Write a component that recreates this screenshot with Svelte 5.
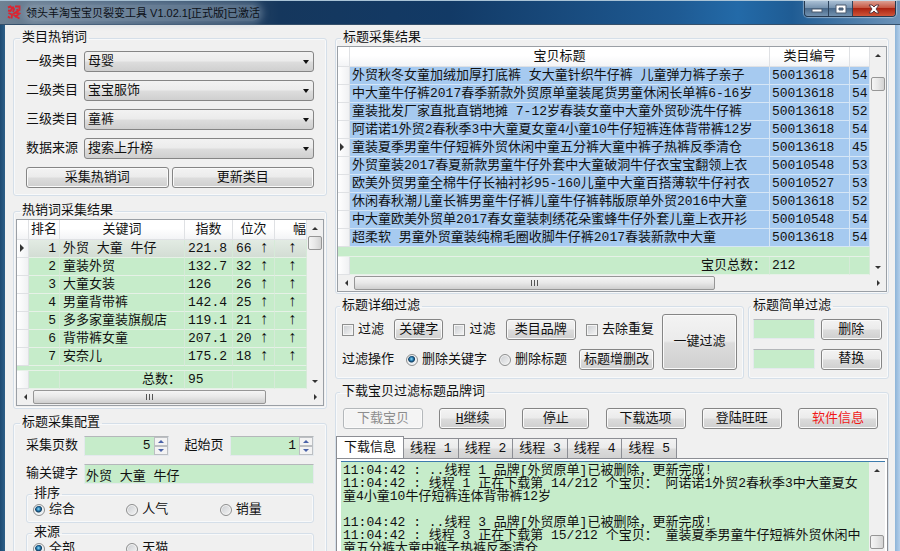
<script lang="ts">
	const selects = [
		{ id: 'cat1', label: '一级类目', value: '母婴' },
		{ id: 'cat2', label: '二级类目', value: '宝宝服饰' },
		{ id: 'cat3', label: '三级类目', value: '童裤' },
		{ id: 'source', label: '数据来源', value: '搜索上升榜' }
	];

	const keywords = [
		['外贸 大童 牛仔', '221.8', 66],
		['童装外贸', '132.7', 32],
		['大童女装', '126', 26],
		['男童背带裤', '142.4', 25],
		['多多家童装旗舰店', '119.1', 21],
		['背带裤女童', '207.1', 20],
		['安奈儿', '175.2', 18]
	];

	const titles = [
		['外贸秋冬女童加绒加厚打底裤 女大童针织牛仔裤 儿童弹力裤子亲子', '50013618', 54],
		['中大童牛仔裤2017春季新款外贸原单童装尾货男童休闲长单裤6-16岁', '50013618', 54],
		['童装批发厂家直批直销地摊 7-12岁春装女童中大童外贸砂洗牛仔裤', '50013618', 52],
		['阿诺诺1外贸2春秋季3中大童夏女童4小童10牛仔短裤连体背带裤12岁', '50013618', 54],
		['童装夏季男童牛仔短裤外贸休闲中童五分裤大童中裤子热裤反季清仓', '50013618', 45],
		['外贸童装2017春夏新款男童牛仔外套中大童破洞牛仔衣宝宝翻领上衣', '50010548', 53],
		['欧美外贸男童全棉牛仔长袖衬衫95-160儿童中大童百搭薄软牛仔衬衣', '50010527', 53],
		['休闲春秋潮儿童长裤男童牛仔裤儿童牛仔裤韩版原单外贸2016中大童', '50013618', 52],
		['中大童欧美外贸单2017春女童装刺绣花朵蜜蜂牛仔外套儿童上衣开衫', '50010548', 54],
		['超柔软 男童外贸童装纯棉毛圈收脚牛仔裤2017春装新款中大童', '50013618', 54]
	];

	const tabs = ['下载信息', '线程 1', '线程 2', '线程 3', '线程 4', '线程 5'];
	let activeTab = $state(0);

	const log = [
		'11:04:42 : ..线程 1 品牌[外贸原单]已被删除，更新完成!',
		'11:04:42 : 线程 1 正在下载第 14/212 个宝贝： 阿诺诺1外贸2春秋季3中大童夏女',
		'童4小童10牛仔短裤连体背带裤12岁',
		'',
		'11:04:42 : ..线程 3 品牌[外贸原单]已被删除，更新完成!',
		'11:04:42 : 线程 3 正在下载第 15/212 个宝贝： 童装夏季男童牛仔短裤外贸休闲中',
		'童五分裤大童中裤子热裤反季清仓'
	].join('\n');

	let pages = $state(5);
	let startPage = $state(1);
	let sort = $state('综合');
	let origin = $state('全部');
	let action = $state('删除关键字');
</script>

{#snippet vbar(offset)}
	<div class="vbar">
		<button class="arrow" aria-label="向上滚动"><i class="tri up"></i></button>
		<div class="vtrack"><div class="vthumb" style="top: {offset}%"></div></div>
		<button class="arrow" aria-label="向下滚动"><i class="tri down"></i></button>
	</div>
{/snippet}

{#snippet hbar(size)}
	<div class="hbar">
		<button class="arrow" aria-label="向左滚动"><i class="tri left"></i></button>
		<div class="htrack">
			<div class="hthumb" style="width: {size}%"><i></i><i></i><i></i></div>
		</div>
		<button class="arrow" aria-label="向右滚动"><i class="tri right"></i></button>
	</div>
{/snippet}

<div class="window">
	<header class="titlebar">
		<svg class="logo" viewBox="0 0 14 15" fill="none" stroke="#dc2430" stroke-width="1.9">
			<path d="M1 2.5 L3.5 1.5 L5 3.5 L3.5 6 L1 5.5 M5.5 1.5 L7 4 L6 7 M8 1.5 H12.5 L12.5 5 L9 7 M1.5 8 L5 9.5 L4.5 13.5 M6 9 L8.5 7.5 L12.5 8.5 L8 12 M6.5 10 L12.5 13.5 M1 11.5 L3 13 M10 4 L11 7" />
		</svg>
		<h1>领头羊淘宝宝贝裂变工具 V1.02.1[正式版]已激活</h1>
		<div class="controls">
			<button aria-label="最小化">
				<svg width="12" height="10" viewBox="0 0 12 10"><rect x="1" y="5" width="10" height="3" fill="#fff" stroke="#4c5c70" /></svg>
			</button>
			<button aria-label="最大化">
				<svg width="12" height="10" viewBox="0 0 12 10"><path d="M1 1 H11 V9 H1 Z M4 4 V6 H8 V4 Z" fill="#fff" fill-rule="evenodd" stroke="#4c5c70" /></svg>
			</button>
			<button class="close" aria-label="关闭">
				<svg width="12" height="10" viewBox="0 0 12 10"><path d="M1 1 H4 L6 3 L8 1 H11 L8 5 L11 9 H8 L6 7 L4 9 H1 L4 5 Z" fill="#fff" stroke="#5c3a42" /></svg>
			</button>
		</div>
	</header>

	<main class="client">
		<div class="column side">
			<fieldset class="category">
				<legend>类目热销词</legend>
				{#each selects as item}
					<div class="field">
						<label for={item.id}>{item.label}</label>
						<span class="select">
							<select id={item.id}><option>{item.value}</option></select>
						</span>
					</div>
				{/each}
				<div class="pair">
					<button class="btn">采集热销词</button>
					<button class="btn">更新类目</button>
				</div>
			</fieldset>

			<fieldset class="results">
				<legend>热销词采集结果</legend>
				<div class="grid">
					<div class="grid-main">
						<table class="words">
							<thead>
								<tr>
									<th class="mark"></th>
									<th class="no">排名</th>
									<th>关键词</th>
									<th class="index">指数</th>
									<th class="rank">位次</th>
									<th class="rise">幅</th>
								</tr>
							</thead>
							<tbody>
								{#each keywords as [word, index, rank], i}
									<tr class:current={i === 0}>
										<td class="mark">{#if i === 0}<i class="tri right"></i>{/if}</td>
										<td class="num">{i + 1}</td>
										<td>{word}</td>
										<td>{index}</td>
										<td>{rank} <b>↑</b></td>
										<td class="mid"><b>↑</b></td>
									</tr>
								{/each}
							</tbody>
							<tfoot>
								<tr class="gap"><td colspan="6"></td></tr>
								<tr>
									<td class="mark"></td>
									<td></td>
									<td class="num">总数：</td>
									<td>95</td>
									<td></td>
									<td></td>
								</tr>
							</tfoot>
						</table>
						{@render vbar(0)}
					</div>
					{@render hbar(85)}
				</div>
			</fieldset>

			<fieldset class="config">
				<legend>标题采集配置</legend>
				<div class="field">
					<label for="pages">采集页数</label>
					<span class="spin">
						<input id="pages" type="text" bind:value={pages} />
						<span class="steps">
							<button aria-label="增加页数" onclick={() => pages++}><i class="tri up"></i></button>
							<button aria-label="减少页数" onclick={() => pages--}><i class="tri down"></i></button>
						</span>
					</span>
					<label class="second" for="start">起始页</label>
					<span class="spin">
						<input id="start" type="text" bind:value={startPage} />
						<span class="steps">
							<button aria-label="增加起始页" onclick={() => startPage++}><i class="tri up"></i></button>
							<button aria-label="减少起始页" onclick={() => startPage--}><i class="tri down"></i></button>
						</span>
					</span>
				</div>
				<div class="field">
					<label for="word">输关键字</label>
					<input id="word" class="text" type="text" value="外贸 大童 牛仔" />
				</div>
				<fieldset class="options">
					<legend>排序</legend>
					{#each ['综合', '人气', '销量'] as name}
						<label><input type="radio" name="sort" value={name} bind:group={sort} />{name}</label>
					{/each}
				</fieldset>
				<fieldset class="options">
					<legend>来源</legend>
					{#each ['全部', '天猫'] as name}
						<label><input type="radio" name="origin" value={name} bind:group={origin} />{name}</label>
					{/each}
				</fieldset>
			</fieldset>
		</div>

		<div class="column">
			<fieldset class="titles-box">
				<legend>标题采集结果</legend>
				<div class="grid">
					<div class="grid-main">
						<table class="titles">
							<thead>
								<tr>
									<th class="mark"></th>
									<th>宝贝标题</th>
									<th class="code">类目编号</th>
									<th class="tail"></th>
								</tr>
							</thead>
							<tbody>
								{#each titles as [title, code, tail], i}
									<tr>
										<td class="mark">{#if i === 4}<i class="tri right"></i>{/if}</td>
										<td>{title}</td>
										<td>{code}</td>
										<td>{tail}</td>
									</tr>
								{/each}
							</tbody>
							<tfoot>
								<tr class="gap"><td colspan="4"></td></tr>
								<tr>
									<td class="mark"></td>
									<td class="num">宝贝总数：</td>
									<td>212</td>
									<td></td>
								</tr>
							</tfoot>
						</table>
						{@render vbar(7)}
					</div>
					{@render hbar(70)}
				</div>
			</fieldset>

			<div class="filters">
				<fieldset class="detail">
					<legend>标题详细过滤</legend>
					<div class="lines">
						<div class="line">
							<label><input type="checkbox" />过滤</label>
							<button class="btn">关键字</button>
							<label><input type="checkbox" />过滤</label>
							<button class="btn brand">类目品牌</button>
							<label><input type="checkbox" />去除重复</label>
						</div>
						<div class="line">
							<span>过滤操作</span>
							{#each ['删除关键字', '删除标题'] as name}
								<label><input type="radio" name="action" value={name} bind:group={action} />{name}</label>
							{/each}
							<button class="btn">标题增删改</button>
						</div>
					</div>
					<button class="btn big">一键过滤</button>
				</fieldset>
				<fieldset class="simple">
					<legend>标题简单过滤</legend>
					<input class="text" type="text" aria-label="删除内容" />
					<button class="btn">删除</button>
					<input class="text" type="text" aria-label="替换内容" />
					<button class="btn">替换</button>
				</fieldset>
			</div>

			<fieldset class="download">
				<legend>下载宝贝过滤标题品牌词</legend>
				<div class="actions">
					<button class="btn" disabled>下载宝贝</button>
					<button class="btn short"><u>H</u>继续</button>
					<button class="btn short">停止</button>
					<button class="btn">下载选项</button>
					<button class="btn">登陆旺旺</button>
					<button class="btn info">软件信息</button>
				</div>
				<div class="tabs" role="tablist">
					{#each tabs as tab, i}
						<button role="tab" aria-selected={i === activeTab} class:active={i === activeTab} onclick={() => (activeTab = i)}>{tab}</button>
					{/each}
				</div>
				<div class="panel">
					<div class="log">
						<textarea readonly aria-label="下载信息" value={log}></textarea>
						{@render vbar(78)}
					</div>
				</div>
			</fieldset>
		</div>
	</main>
</div>

<style>
	:global(body) {
		margin: 0;
		overflow: hidden;
	}
	.window {
		box-sizing: border-box;
		height: 100vh;
		padding: 0 6px;
		overflow: hidden;
		background: linear-gradient(90deg, #1d4a72 0, #2d5f88 5px, transparent 5px, transparent calc(100% - 5px), #8db4d8 calc(100% - 5px), #b4cfea 100%), #f0f0f0;
		font-family: 'Liberation Mono', 'Noto Sans CJK SC', monospace;
		font-size: 13px;
		line-height: 16px;
		color: #111;
	}
	.window :is(button, input, select, textarea) {
		box-sizing: border-box;
		margin: 0;
		font: inherit;
		color: inherit;
	}

	/* title bar */
	.titlebar {
		display: flex;
		align-items: center;
		gap: 5px;
		height: 25px;
		margin: 0 -6px;
		padding-left: 7px;
		background: linear-gradient(90deg, #6f8294 0, #4d6680 12%, #2c4866 26%, #15375d 31%, #123a66 50%, #1e5a93 75%, #236aa8 82%, #1f5c94 88%, #6d93b8 100%);
		border-top: 1px solid #a9c3d6;
		border-bottom: 1px solid #35506b;
		box-sizing: border-box;
	}
	.logo {
		width: 14px;
		height: 15px;
	}
	h1 {
		margin: 0;
		font: 11px/16px 'Liberation Sans', 'Noto Sans CJK SC', sans-serif;
		color: #0c1017;
		background: rgba(160, 178, 196, 0.4);
		box-shadow: 0 0 7px 3px rgba(160, 178, 196, 0.4);
		border-radius: 8px;
	}
	.controls {
		display: flex;
		align-self: flex-start;
		margin-left: auto;
		margin-right: 4px;
		border: 1px solid #26394f;
		border-top: 0;
		border-radius: 0 0 4px 4px;
		overflow: hidden;
		box-shadow: 0 0 1px 1px rgba(255, 255, 255, 0.4);
	}
	.controls button {
		display: flex;
		align-items: center;
		justify-content: center;
		width: 24px;
		height: 15px;
		padding: 0;
		border: 0;
		border-right: 1px solid #2d435c;
		background: linear-gradient(#a9bfd4, #7894b0 45%, #4a6a8b 50%, #7392b0);
	}
	.controls .close {
		width: 42px;
		border-right: 0;
		background: linear-gradient(#dc9f92, #c75743 45%, #ab2412 50%, #cf5438);
	}

	/* page columns */
	.client {
		display: grid;
		grid-template-columns: 314fr 554fr;
		gap: 8px;
		padding: 5px 5px 0 7px;
	}
	.column {
		display: flex;
		flex-direction: column;
		min-width: 0;
	}
	fieldset {
		min-width: 0;
		margin: 0;
		padding: 0;
		border: 1px solid #d5dfe9;
		border-radius: 3px;
		box-shadow: inset 0 0 0 1px #f8f9fa;
	}
	legend {
		margin-left: 4px;
		padding: 0 2px;
	}
	.btn {
		height: 21px;
		padding: 0 4px;
		border: 1px solid #858585;
		border-radius: 3px;
		background: linear-gradient(#f3f3f3, #ebebeb 48%, #dcdcdc 52%, #cfcfcf);
		box-shadow: inset 0 0 0 1px #fafafa;
		line-height: 17px;
		white-space: nowrap;
	}
	.btn:disabled {
		color: #8d8d8d;
		border-color: #b4b8bb;
		background: #f4f4f4;
	}
	.field {
		display: flex;
		align-items: center;
		gap: 6px;
	}
	.text,
	.spin {
		border: 1px solid #e4e9ed;
		border-top-color: #b4b7ba;
		background: #c6ecca;
	}
	.category {
		display: flex;
		flex-direction: column;
		gap: 8px;
		padding: 5px 12px 7px;
	}
	.category legend,
	.config > legend {
		margin-left: -6px;
	}
	.select {
		position: relative;
		flex: 1;
	}
	.select::after {
		content: '';
		position: absolute;
		right: 5px;
		top: 9px;
		border: 3px solid transparent;
		border-top: 4px solid #111;
		border-bottom: 0;
		pointer-events: none;
	}
	select {
		display: block;
		appearance: none;
		width: 100%;
		height: 21px;
		padding: 0 3px;
		border: 1px solid #858585;
		border-radius: 3px;
		background: linear-gradient(#f2f2f2, #ebebeb 48%, #dddddd 52%, #cfcfcf);
	}
	.pair {
		display: grid;
		grid-template-columns: 1fr 1fr;
		gap: 3px;
	}

	/* data grids */
	.results {
		margin-top: 7px;
		padding: 0 2px 2px;
	}
	.grid {
		border: 1px solid #9a9fa5;
		background: #f0f0f0;
	}
	.grid-main {
		display: flex;
	}
	table {
		flex: 1;
		min-width: 0;
		width: 100%;
		table-layout: fixed;
		border-collapse: separate;
		border-spacing: 0;
		background: #c6ecca;
	}
	th,
	td {
		box-sizing: border-box;
		height: 18px;
		padding: 0 0 0 3px;
		overflow: hidden;
		font-weight: normal;
		line-height: 17px;
		white-space: nowrap;
		border-right: 1px solid #d6ead8;
		border-bottom: 1px solid #e6f1e7;
	}
	th {
		height: 20px;
		padding: 0;
		background: linear-gradient(#fff, #fff 45%, #f3f4f6);
		border-color: #dfe1e4;
	}
	th.mark {
		width: 12px;
	}
	th.no {
		width: 31px;
	}
	th.index {
		width: 48px;
	}
	th.rank {
		width: 42px;
	}
	th.rise {
		width: 32px;
		text-align: right;
	}
	th.code {
		width: 80px;
	}
	th.tail {
		width: 20px;
	}
	td.mark {
		padding: 0 0 0 3px;
		background: linear-gradient(90deg, #fff, #f0f1f3);
		border-color: #dfe1e4;
	}
	td.num {
		padding: 0 3px 0 0;
		text-align: right;
	}
	td.mid {
		padding: 0 0 0 4px;
		text-align: center;
	}
	td b {
		font-size: 16px;
		line-height: 14px;
	}
	.current td:not(.mark) {
		background: linear-gradient(#e2ebe3, #d3ddd4);
	}
	.titles tbody td:not(.mark) {
		background: #a6caf0;
		border-color: #d6e6f6;
	}
	.titles td {
		padding-left: 2px;
	}
	.gap td {
		height: 5px;
		padding: 0;
		line-height: 4px;
	}
	.titles .gap td {
		height: 10px;
	}
	.tri {
		display: inline-block;
		width: 0;
		height: 0;
		border: 3px solid transparent;
	}
	.tri.up {
		border-top: 0;
		border-bottom-color: #333;
	}
	.tri.down {
		border-bottom: 0;
		border-top-color: #333;
	}
	.tri.left {
		border-left: 0;
		border-right-color: #333;
	}
	.tri.right {
		border-right: 0;
		border-left-color: #333;
	}
	td .tri.right {
		border-width: 4px 0 4px 4px;
	}
	.arrow {
		display: flex;
		align-items: center;
		justify-content: center;
		flex: none;
		width: 16px;
		height: 16px;
		padding: 0;
		border: 0;
		background: none;
	}
	.vbar {
		display: flex;
		flex-direction: column;
		flex: none;
		width: 16px;
		background: #f0f0f0;
	}
	.vtrack {
		position: relative;
		flex: 1;
	}
	.vthumb {
		position: absolute;
		left: 1px;
		right: 1px;
		height: 14px;
		box-sizing: border-box;
		border: 1px solid #969696;
		border-radius: 2px;
		background: linear-gradient(90deg, #f5f5f5, #e8e8e8 48%, #d3d3d3);
	}
	.hbar {
		display: flex;
		height: 16px;
		background: #f0f0f0;
	}
	.htrack {
		flex: 1;
		padding-top: 1px;
	}
	.hthumb {
		display: flex;
		align-items: center;
		justify-content: center;
		gap: 2px;
		height: 14px;
		box-sizing: border-box;
		border: 1px solid #969696;
		border-radius: 2px;
		background: linear-gradient(#f5f5f5, #e8e8e8 48%, #cfcfcf);
	}
	.hthumb i {
		width: 1px;
		height: 6px;
		background: #555;
	}

	/* capture settings */
	.config {
		display: flex;
		flex-direction: column;
		gap: 8px;
		margin-top: 6px;
		padding: 5px 12px 8px;
	}
	.spin {
		display: flex;
		flex: 1;
		min-width: 0;
		height: 20px;
		box-sizing: border-box;
	}
	.spin input {
		flex: 1;
		width: 0;
		min-width: 0;
		padding: 0 3px;
		border: 0;
		background: none;
		text-align: right;
	}
	.steps {
		display: flex;
		flex-direction: column;
		width: 14px;
		background: #f0f0f0;
	}
	.steps button {
		display: flex;
		align-items: center;
		justify-content: center;
		flex: 1;
		padding: 0;
		border: 1px solid #bcbfc3;
		background: #f3f3f3;
	}
	.steps .tri.up {
		border-bottom-color: #4a62a8;
	}
	.steps .tri.down {
		border-top-color: #4a62a8;
	}
	.second {
		margin-left: 10px;
	}
	.text {
		flex: 1;
		min-width: 0;
		height: 20px;
		padding: 0 1px;
	}
	.options {
		display: grid;
		grid-template-columns: 1fr 1fr 1fr;
		margin-top: -6px;
		padding: 0 0 4px 6px;
	}
	.options legend {
		margin-left: -1px;
	}
	label {
		display: inline-flex;
		align-items: center;
		gap: 4px;
		white-space: nowrap;
	}
	input[type='radio'],
	input[type='checkbox'] {
		appearance: none;
		flex: none;
		width: 12px;
		height: 12px;
		border: 1px solid #8e8f8f;
		background: linear-gradient(135deg, #c9ccd0, #f6f6f6);
		box-shadow: inset 0 0 0 1px #f4f4f4;
	}
	input[type='radio'] {
		border-radius: 50%;
	}
	input[type='radio']:checked {
		background: radial-gradient(circle at 45% 40%, #8fdcf7 0, #1f6fa5 2px, #123c5c 3px, #e9eef2 4px);
	}

	/* filters */
	.filters {
		display: grid;
		grid-template-columns: 409fr 141fr;
		gap: 4px;
		margin-top: 4px;
	}
	.titles-box {
		padding: 0 1px 1px;
	}
	.detail {
		display: flex;
		gap: 8px;
		padding: 0 6px 8px;
	}
	.detail legend {
		margin-left: -2px;
	}
	.lines {
		display: flex;
		flex: 1;
		flex-direction: column;
		justify-content: space-between;
		padding-top: 5px;
	}
	.line {
		display: flex;
		align-items: center;
		justify-content: space-between;
	}
	.brand {
		padding: 0 8px;
	}
	.big {
		width: 75px;
		height: 56px;
	}
	.simple {
		display: grid;
		grid-template-columns: 1fr 1fr;
		gap: 8px 6px;
		padding: 5px 6px 8px 4px;
	}
	.simple legend {
		margin-left: -2px;
	}

	/* download log */
	.download {
		margin-top: 5px;
		padding-top: 8px;
	}
	.actions {
		display: flex;
		justify-content: space-between;
		padding: 0 10px 0 7px;
	}
	.actions .btn {
		width: 80px;
	}
	.actions .short {
		width: 67px;
	}
	.actions .info {
		color: #f01818;
	}
	.tabs {
		display: flex;
		align-items: flex-end;
		margin-top: 7px;
	}
	.tabs button {
		height: 20px;
		padding: 0 6px;
		border: 1px solid #8c8e94;
		border-left-width: 0;
		border-bottom: 0;
		background: linear-gradient(#f2f2f2, #ebebeb 48%, #dcdcdc 52%, #d2d2d2);
	}
	.tabs .active {
		height: 22px;
		padding: 0 7px;
		border-left-width: 1px;
		background: #fff;
	}
	.panel {
		padding: 2px 2px 0 4px;
		border: 1px solid #8c8e94;
		background: #fff;
	}
	.log {
		display: flex;
		height: 105px;
		border-top: 1px solid #3d7bad;
		background: #c6ecca;
	}
	.log textarea {
		flex: 1;
		padding: 2px;
		border: 0;
		outline: 0;
		resize: none;
		overflow: hidden;
		background: none;
		line-height: 13px;
		white-space: pre;
	}
</style>
